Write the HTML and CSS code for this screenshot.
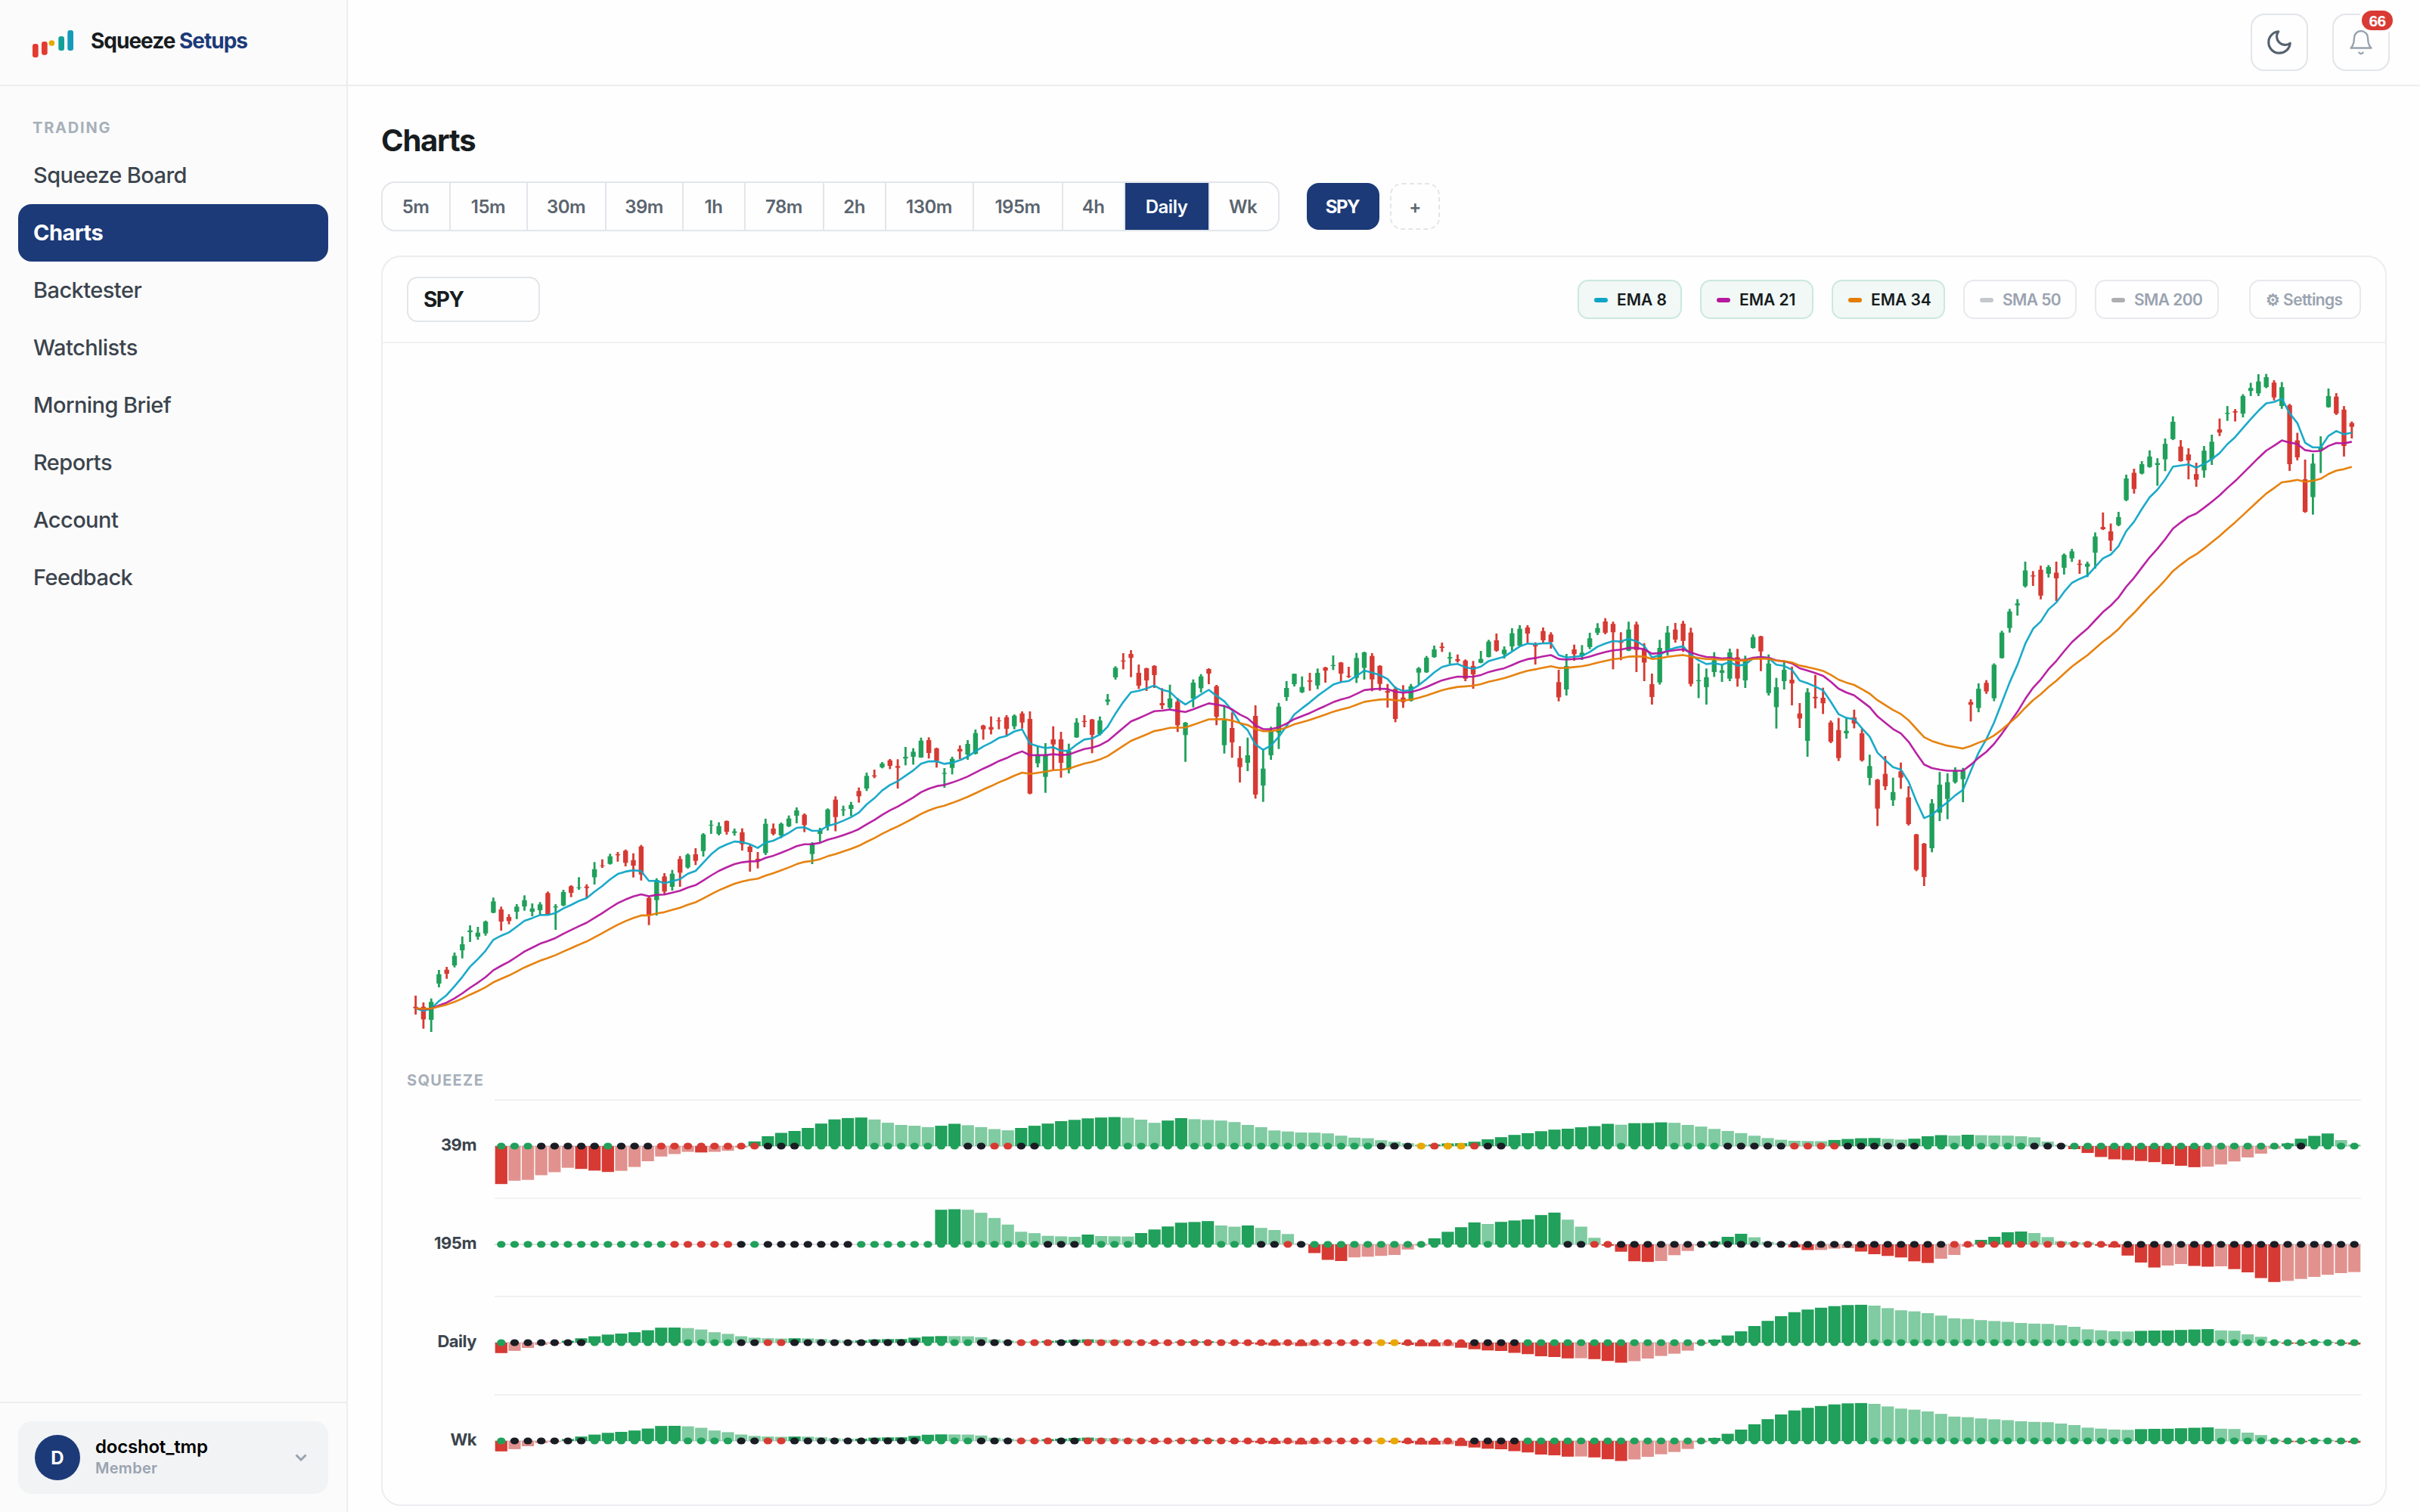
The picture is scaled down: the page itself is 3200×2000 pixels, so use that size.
FILE: index.html
```html
<!DOCTYPE html>
<html lang="en">
<head>
<meta charset="utf-8">
<title>Squeeze Setups – Charts</title>
<link rel="stylesheet" href="styles.css">
</head>
<body>
<div class="app">
  <aside class="sidebar">
    <div class="brand">
      <svg class="brand-mark" viewBox="0 0 54 36" width="54" height="36">
        <rect x="0" y="18" width="7.7" height="18" rx="3" fill="#e23b30"/>
        <rect x="12" y="15" width="7.7" height="17.8" rx="3" fill="#e23b30"/>
        <circle cx="25.4" cy="17" r="3.8" fill="#e8a800"/>
        <rect x="34.3" y="8" width="7.7" height="19" rx="3" fill="#12a19a"/>
        <rect x="46.3" y="0" width="7.7" height="27" rx="3" fill="#169ab9"/>
      </svg>
      <span class="brand-name">Squeeze <b>Setups</b></span>
    </div>
    <nav class="nav">
      <div class="nav-title">TRADING</div>
      <a class="nav-item">Squeeze Board</a>
      <a class="nav-item active">Charts</a>
      <a class="nav-item">Backtester</a>
      <a class="nav-item">Watchlists</a>
      <a class="nav-item">Morning Brief</a>
      <a class="nav-item">Reports</a>
      <a class="nav-item">Account</a>
      <a class="nav-item">Feedback</a>
    </nav>
    <div class="side-foot">
      <div class="user">
        <span class="avatar">D</span>
        <span class="user-text"><span class="user-name">docshot_tmp</span><span class="user-role">Member</span></span>
        <svg class="chev" viewBox="0 0 16 10" width="16" height="10"><path d="M1.5 1.5 8 8l6.5-6.5" fill="none" stroke="#9aa3b0" stroke-width="3"/></svg>
      </div>
    </div>
  </aside>

  <div class="main">
    <header class="topbar">
      <button class="icon-btn moon">
        <svg viewBox="0 0 24 24" width="38" height="38"><path d="M21 12.79A9 9 0 1 1 11.21 3 7 7 0 0 0 21 12.79z"/></svg>
      </button>
      <button class="icon-btn bell">
        <svg viewBox="0 0 24 24" width="36" height="36"><path d="M18 8A6 6 0 0 0 6 8c0 7-3 9-3 9h18s-3-2-3-9"/><path d="M13.73 21a2 2 0 0 1-3.46 0"/></svg>
        <span class="badge">66</span>
      </button>
    </header>

    <main class="content">
      <h1 class="title">Charts</h1>
      <div class="controls">
        <div class="frames">
          <span>5m</span><span>15m</span><span>30m</span><span>39m</span><span>1h</span><span>78m</span><span>2h</span><span>130m</span><span>195m</span><span>4h</span><span class="on">Daily</span><span>Wk</span>
        </div>
        <span class="sym">SPY</span>
        <span class="add">+</span>
      </div>

      <section class="card">
        <div class="card-head">
          <div class="symbol-input">SPY</div>
          <div class="legend">
            <span class="chip on w-s"><i class="sw ema8"></i>EMA 8</span>
            <span class="chip on w-m"><i class="sw ema21"></i>EMA 21</span>
            <span class="chip on w-m"><i class="sw ema34"></i>EMA 34</span>
            <span class="chip w-m"><i class="sw sma50"></i>SMA 50</span>
            <span class="chip w-l"><i class="sw sma200"></i>SMA 200</span>
            <span class="chip settings">⚙ Settings</span>
          </div>
        </div>
        <div class="card-body">
          <svg class="price" id="price" viewBox="0 0 2584 960" width="2584" height="960"></svg>
          <div class="sq-title">SQUEEZE</div>
          <div class="sq-row"><span class="sq-label">39m</span><div class="strip"><svg id="sq-39m" viewBox="0 0 2468 120" width="2468" height="120"></svg></div></div>
          <div class="sq-row"><span class="sq-label">195m</span><div class="strip"><svg id="sq-195m" viewBox="0 0 2468 120" width="2468" height="120"></svg></div></div>
          <div class="sq-row"><span class="sq-label">Daily</span><div class="strip"><svg id="sq-daily" viewBox="0 0 2468 120" width="2468" height="120"></svg></div></div>
          <div class="sq-row"><span class="sq-label">Wk</span><div class="strip"><svg id="sq-wk" viewBox="0 0 2468 120" width="2468" height="120"></svg></div></div>
        </div>
      </section>
    </main>
  </div>
</div>
<script src="charts.js"></script>
</body>
</html>
```
FILE: styles.css
```css
* { box-sizing: border-box; }
body {
  margin: 0;
  font-family: Inter, "Liberation Sans", sans-serif;
  color: #171c20;
  background: #fefefe;
}
.app { display: flex; width: 3200px; height: 2000px; overflow: hidden; }

/* sidebar */
.sidebar {
  width: 460px;
  flex: none;
  display: flex;
  flex-direction: column;
  background: #fbfbfb;
  border-right: 2px solid #ededf1;
}
.brand {
  height: 114px;
  display: flex;
  align-items: center;
  padding-left: 43px;
  border-bottom: 2px solid #ededf1;
}
.brand-mark { margin-top: 4px; }
.brand-name {
  margin: -4px 0 0 23px;
  font-size: 28px;
  font-weight: 700;
  letter-spacing: -1px;
  white-space: nowrap;
}
.brand-name b { color: #1c3a78; font-weight: 700; }
.nav { flex: 1; padding: 30px 24px 0; }
.nav-title {
  height: 50px;
  line-height: 51px;
  padding-left: 19px;
  font-size: 20px;
  font-weight: 700;
  letter-spacing: 1.8px;
  color: #a7b0ba;
}
.nav-item {
  display: flex;
  align-items: center;
  height: 76px;
  padding: 0 0 2px 20px;
  border-radius: 18px;
  font-size: 29px;
  font-weight: 500;
  letter-spacing: -0.55px;
  color: #3b444d;
}
.nav-item.active {
  background: #1c3a78;
  color: #fff;
  font-weight: 700;
}
.side-foot { padding: 24px; border-top: 2px solid #ededf1; }
.user {
  display: flex;
  align-items: center;
  height: 96px;
  padding: 0 28px 0 22px;
  border-radius: 18px;
  background: #f2f3f5;
}
.avatar {
  width: 60px;
  height: 60px;
  border-radius: 50%;
  background: #1c3a78;
  color: #fff;
  font-size: 24px;
  font-weight: 700;
  line-height: 61px;
  text-align: center;
}
.user-text { flex: 1; margin-left: 20px; display: flex; flex-direction: column; line-height: 29px; }
.user-name { font-size: 24px; font-weight: 600; letter-spacing: -0.2px; color: #000; }
.user-role { font-size: 20px; font-weight: 600; letter-spacing: 0.3px; color: #9aa3b0; }

/* top bar */
.main { flex: 1; display: flex; flex-direction: column; }
.topbar {
  height: 114px;
  flex: none;
  display: flex;
  justify-content: flex-end;
  align-items: center;
  gap: 32px;
  padding-right: 40px;
  border-bottom: 2px solid #ededf1;
}
.icon-btn {
  position: relative;
  width: 76px;
  height: 76px;
  padding: 0;
  display: flex;
  align-items: center;
  justify-content: center;
  border: 2px solid #e2e5ea;
  border-radius: 18px;
  background: #fefefe;
}
.icon-btn svg { fill: none; stroke-linecap: round; stroke-linejoin: round; }
.moon svg { stroke: #56626e; stroke-width: 2; }
.bell svg { stroke: #98a2ae; stroke-width: 1.6; }
.badge {
  position: absolute;
  top: -10px;
  right: -10px;
  width: 49px;
  height: 34px;
  border: 4px solid #fefefe;
  border-radius: 17px;
  background: #d93a34;
  color: #fff;
  font-size: 21px;
  font-weight: 700;
  line-height: 28px;
  letter-spacing: -0.8px;
  text-align: center;
}

/* page */
.content { padding: 48px 44px 0 44px; }
.title {
  margin: 0 0 32px;
  height: 46px;
  line-height: 48px;
  font-size: 40px;
  font-weight: 700;
  letter-spacing: -1.2px;
}
.controls { display: flex; align-items: center; margin-bottom: 32px; font-size: 24px; font-weight: 600; letter-spacing: -0.5px; }
.frames {
  display: grid;
  grid-template-columns: 90px 102px 104px 102px 82px 104px 82px 116px 118px 82px 112px 90px;
  height: 66px;
  border: 2px solid #e2e5ea;
  border-radius: 18px;
  overflow: hidden;
  color: #5b6570;
}
.frames span { padding-right: 1px; border-right: 2px solid #e2e5ea; line-height: 63px; text-align: center; }
.frames span:last-child { padding-right: 3px; border-right: 0; }
.frames .on { background: #1c3a78; color: #fff; }
.sym {
  width: 96px;
  height: 62px;
  margin-left: 36px;
  padding-right: 2px;
  border-radius: 16px;
  background: #1c3a78;
  color: #fff;
  font-weight: 700;
  letter-spacing: -1.5px;
  line-height: 63px;
  text-align: center;
}
.add {
  width: 66px;
  height: 62px;
  margin-left: 14px;
  border: 2px dashed #e2e5ea;
  border-radius: 16px;
  color: #5b6570;
  line-height: 59px;
  text-align: center;
}

/* chart card */
.card { width: 2652px; height: 1654px; border: 2px solid #ededf1; border-radius: 26px; }
.card-head {
  display: flex;
  align-items: center;
  justify-content: space-between;
  height: 114px;
  padding: 0 32px;
  border-bottom: 2px solid #f0f0f3;
}
.symbol-input {
  width: 176px;
  height: 60px;
  padding-left: 20px;
  border: 2px solid #e2e5ea;
  border-radius: 14px;
  font-size: 28px;
  font-weight: 700;
  letter-spacing: -1.5px;
  line-height: 56px;
}
.legend { display: flex; gap: 24px; }
.chip {
  display: flex;
  align-items: center;
  height: 52px;
  padding: 1px 0 0 20px;
  border: 2px solid #e8e9ed;
  border-radius: 14px;
  font-size: 21px;
  font-weight: 600;
  letter-spacing: -0.6px;
  color: #9aa3b0;
  white-space: nowrap;
}
.chip.on { background: #f1f8f6; border-color: #cbe8e0; color: #171c20; font-weight: 600; letter-spacing: -0.05px; }
.w-s { width: 138px; }
.w-m { width: 150px; }
.w-l { width: 164px; }
.settings { width: 148px; margin-left: 16px; }
.sw { width: 18px; height: 6px; margin-right: 12px; border-radius: 3px; }
.ema8 { background: #10a5c6; }
.ema21 { background: #b5179e; }
.ema34 { background: #e57c04; }
.sma50 { background: #c4c8cd; }
.sma200 { background: #aeaeb0; }

.card-body { padding: 0 32px; }
.price { display: block; }
.sq-title {
  height: 40px;
  line-height: 30px;
  font-size: 20px;
  font-weight: 700;
  letter-spacing: 1.3px;
  color: #a7b0ba;
}
.sq-row { display: grid; grid-template-columns: 92px 2468px; column-gap: 24px; height: 130px; }
.sq-label {
  font-size: 22px;
  font-weight: 700;
  letter-spacing: -0.5px;
  line-height: 120px;
  text-align: right;
  color: #3b444d;
}
.strip { border-top: 2px solid #f1f1f3; }
.strip svg { display: block; }
```
FILE: charts.js
```js
// Price candles, grouped in blocks. Each block has its own origin and unit;
// each candle is: direction (r = down, g = up), high, body top, body bottom, low.
const blocks = [
  { top: 406, unit: 3, rows: `r 1371 1415 1421 1446|r 1398 1415 1465 1502|g 1382 1396 1467 1515|g 1269 1286 1323 1338|r 1257 1268 1284 1304
g 1200 1213 1251 1259|g 1136 1167 1191 1223|g 1092 1112 1119 1158|g 1098 1121 1137 1149|g 1073 1077 1124 1133
g 982 997 1042 1044|r 1018 1029 1077 1113|r 1048 1059 1075 1088|g 1008 1018 1038 1067|g 973 992 1017 1034
g 1005 1025 1038 1056|g 1000 1009 1032 1052|r 958 964 1049 1051|g 1008 1017 1021 1110|g 951 960 1013 1016
r 933 937 963 980|g 901 941 944 951|r 929 938 944 984|g 841 869 901 930|r 830 854 857 864
g 808 818 848 851|r 801 810 814 839|r 791 796 844 858|r 806 833 855 902|r 773 779 890 914
r 977 983 1051 1091|g 905 912 992 1053|r 885 898 958 967|g 872 887 939 954|r 817 829 883 939
g 807 812 862 867|r 786 810 836 853|g 726 731 797 819|g 675 693 696 729|g 683 698 729 735
r 676 678 721 732|g 708 719 725 736|r 707 723 770 795|r 774 780 801 879|r 801 828 835 866
g 669 689 805 813|r 688 708 729 735|g 684 689 735 746|g 656 668 699 702|g 624 636 657 687
r 648 653 694 722|g 762 767 809 849|g 705 713 729 763|g 628 632 698 716|r 580 593 662 719
g 617 632 636 658|g 602 614 630 658|r 545 559 580 605|g 486 499 549 559|r 474 497 501 508
g 444 450 465 469|r 432 437 459 472|r 433 460 467 549|g 384 423 430 457|g 389 403 423 454
g 347 359 426 427|r 346 357 408 430` },
  { top: 326, unit: 3, rows: `r 627 630 680 706|g 708 727 731 786|g 663 671 707 733|r 618 632 642 672
g 597 612 654 675|g 555 569 651 654|r 536 539 554 595|r 503 545 555 574|r 506 519 522 554
r 498 506 552 580|g 495 500 542 554|r 483 491 527 551|r 483 513 809 812|g 622 655 689 705
g 609 655 743 806|r 542 594 614 717|r 564 594 687 746|g 611 640 714 729|g 510 527 586 588
r 498 521 525 546|r 513 515 576 649|g 503 519 573 579|g 414 436 444 458|g 304 310 348 357
r 252 281 285 316|r 240 255 271 347|r 297 330 381 394|r 310 312 360 402|r 300 302 339 390
r 391 450 459 474|g 377 432 468 476|r 430 445 538 565|g 525 528 577 683|g 356 369 432 467
g 335 344 391 408|r 312 315 333 375|r 378 383 504 538|g 458 519 617 650|r 487 549 606 667
r 621 668 704 765|g 587 657 687 720|r 459 501 813 829|g 633 710 777 842|g 544 558 657 675
g 449 464 567 632|g 363 390 426 441|g 333 334 375 384|g 344 386 407 410|r 330 360 365 401
g 313 330 380 395|r 306 309 321 369|g 261 299 303 319|r 287 289 333 368|r 306 342 346 350
g 251 271 350 370|g 246 249 310 357|r 252 263 356 403|r 300 302 374 401|r 374 402 409 468
r 384 394 513 526|r 379 428 446 469|g 374 383 441 444|g 307 312 329 378|g 263 270 328 330
g 222 237 268 270|r 210 226 231 247|g 248 268 273 295|r 257 276 283 289|r 277 281 353 363
r 283 303 336 393|g 243 275 290 292|g 199 206 267 269|r 174 201 242 246|g 225 238 256 273
g 153 173 225 244|g 141 155 222 226|r 141 150 174 212|r 209 220 225 297|r 150 164 201 212
r 169 178 208 234|r 318 367 427 443|g 255 303 396 420|r 218 237 256 282|g 220 250 264 279
g 171 193 228 236|g 133 152 171 180|r 113 126 171 177|r 127 136 169 316|r 169 205 211 280
g 127 158 242 244|r 127 138 239 327|r 212 236 289 363|r 333 375 426 456|g 199 231 368 377
g 144 170 240 261|r 132 158 198 210|r 124 135 203 247|r 151 170 374 384|g 293 359 363 430
g 313 347 387 456|g 248 280 327 346|g 296 320 330 366|g 234 249 353 363|r 235 268 353 385
g 262 280 360 390|g 178 188 231 234|r 183 185 245 323|g 257 293 410 420|g 350 387 466 551
g 287 318 363 396|r 305 357 372 459|r 450 491 511 549|g 391 407 600 663|r 338 425 431 471
r 389 429 451 493|r 519 527 603 609|r 509 557 668 680|g 508 560 570 591|r 476 507 531 550
r 551 570 677 682|g 655 700 747 776|r 751 754 869 938|r 660 731 780 795|g 746 803 835 858
r 686 721 746 790|r 780 824 930 936|r 969 971 1111 1117|r 1005 1008 1140 1176|g 831 848 1026 1042` },
  { top: 26, unit: 2.8, rows: `g 1515 1562 1666 1697|g 1520 1553 1615 1690|g 1498 1512 1553 1558|g 1500 1510 1542 1627
r 1246 1256 1266 1328|g 1187 1207 1278 1294|r 1175 1185 1217 1226|g 1113 1118 1242 1253|g 992 999 1093 1095
g 911 921 982 999|g 875 891 898 936|g 736 769 827 832|r 771 787 791 826|r 751 766 862 876
g 749 756 781 795|r 736 777 798 882|g 706 711 759 784|g 689 698 724 737|r 729 744 748 781
g 736 744 755 793|g 628 643 703 762|r 554 608 616 619|r 595 624 658 697|g 552 571 601 605
g 414 428 508 512|r 392 407 467 484|g 364 375 410 413|g 324 347 386 388|g 353 371 378 455
g 280 300 357 401|g 198 218 282 286|r 286 310 364 366|r 316 339 361 431|r 370 412 433 459
g 308 325 398 425|g 266 292 357 378|r 206 246 258 271|g 160 185 189 215|r 171 179 184 217
g 116 123 188 202|g 74 93 104 123|g 42 69 113 123|g 41 53 90 94|r 64 73 128 139
g 71 90 160 170|r 152 157 375 400|r 259 287 350 361|r 358 431 552 555|g 336 373 497 562
g 272 311 325 408|g 95 123 164 166|r 112 125 188 193|r 160 173 308 347|r 217 223 237 280` }
];

const candles = blocks.flatMap(b => b.rows.split(/[|\n]/).map(s => {
  const [dir, ...v] = s.trim().split(" ");
  const [high, top, bottom, low] = v.map(n => b.top + n / b.unit);
  return { dir, high, top, bottom, low };
}));

const candleX = i => 11.6 + i * 10.282;

function ema(period) {
  const k = 2 / (period + 1);
  let value = null;
  return candles.map((c, i) => {
    const close = c.dir === "g" ? c.top : c.bottom;
    value = value === null ? close : value + k * (close - value);
    return candleX(i).toFixed(1) + "," + value.toFixed(1);
  }).join(" ");
}

function drawPrice() {
  let out = "";
  candles.forEach((c, i) => {
    const x = candleX(i);
    const fill = c.dir === "g" ? "#20a05a" : "#d63a33";
    out += `<rect x="${(x - 1.4).toFixed(1)}" y="${c.high.toFixed(1)}" width="2.8" height="${(c.low - c.high).toFixed(1)}" fill="${fill}"/>`;
    out += `<rect x="${(x - 3.2).toFixed(1)}" y="${c.top.toFixed(1)}" width="6.4" height="${(c.bottom - c.top).toFixed(1)}" fill="${fill}"/>`;
  });
  [[8, "#10a5c6"], [21, "#b5179e"], [34, "#e57c04"]].forEach(([period, color]) => {
    out += `<polyline points="${ema(period)}" fill="none" stroke="${color}" stroke-opacity="0.95" stroke-width="2.6" stroke-linejoin="round"/>`;
  });
  document.getElementById("price").innerHTML = out;
}

// Momentum heights (positive above the zero line) and run-length squeeze dots.
const daily = {
  bars: `-13.8 -10.9 -7 -3 -1.5 2.5 5.8 8.4 10.7 12 13.8 16.4 19.8 20 19.3 17.4 13.8 11.6 8.5 6.6 5.8 5.4 5.8 5.6 4.7 3.6 2.8 3 4.3 4.7 4.8 6.6 8.2 8.7 8.6 8.4 7.2 4.2 2.8 1.8 1.6 2.4
3 3.9 4.4 3.8 3.6 2.9 1.8 -1.5 -1.4 1.5 1.7 1.8 1.3 -1.3 -1.6 -2.6 -3.8 -2.8 -4.5 -3.8 -1.8 -1.6 -1.5 -1.3 -1.2 -1.8 -3 -4.7 -4.8 -4.5 -6.7 -8.7 -10.3 -11 -13.5 -15.2 -18 -19 -20.8 -20.6 -21.8 -24.2 -26.5 -24.5 -21 -17.6 -14.6 -10.6 -1.8 4
9.5 15 22 28.8 35 40.3 43.8 46.2 48.3 49.7 50.1 49 45.6 42.8 41.4 39 35.8 32.2 31.4 29.8 28.6 27.5 26 25.2 24.8 23 21 17.6 16.3 15.1 14.7 15.6 16 16.1 16.8 17.4 17.9 16.2 15.8 11 7.8 1.8 -1.5 -1.6 1.6 1.3 -1.5 -2.5`,
  dots: "g1 k6 g11 k2 r2 k10 g4 k3 r3 k2 r22 o2 r5 k4 g63"
};
const squeeze = {
  "sq-39m": {
    bars: `-50.2 -45.8 -44.7 -38.5 -34.5 -28.7 -30.2 -32.4 -34.2 -32.7 -27.6 -20 -13.8 -10.5 -7.6 -8.4 -7.6 -6.2 -2 6.2 13.1 17.5 20 24 29.8 35.3 37.1 37.8 35.2 30.9 28 26.9 25.1 26.9 29.5 27.6 25.1 22.5 20.9 24 26.9 29.8
33 34.7 36.7 37.8 38.4 37.5 35 30.8 33.8 37 35.6 34.6 33.8 31.8 28 25 20.7 19.3 18 17.8 16.8 13.8 11.2 10.4 7.8 5.8 3.8 2 2.2 3.5 3.8 5.8 9 11.8 14.8 17.1 19.7 21.8 23 24.9 26.4 29.5 28.3 30.3 30.4 31.4 30.8 28 25.8 22.7
20 17.2 13.7 10.6 8.4 7 6.7 6.5 8.1 9.4 10.4 10.7 9.6 8.6 9.8 13 14.5 13.8 15 14.4 14 13.8 13 11.6 6 1.8 -4 -9.1 -14.4 -17.5 -18.5 -19.7 -21.2 -24 -26 -27.9 -27.2 -24.3 -20.3 -15 -10 -3.5 3.5 9.8 13.5 16.7 8 2`,
    dots: "g3 k5 g1 k3 r8 k3 g12 k2 r2 k2 g25 k3 o1 r1 o2 r1 k2 g16 k5 r4 k6 g8 k3 g17 k1 g4"
  },
  "sq-195m": {
    bars: `0 0 0 0 0 0 0 0 0 0 0 0 0 0 0 0 0 0 0 0 0 0 0 0 0 0 0 0 0 0 0 0 0 45.8 46.5 45.8 41.8 34.9 26.2 16.7 14.9 11.3
10.6 10 13 11 10.7 10.4 15 19.7 23.7 28.7 29.6 30.8 25 23.4 25 21.8 19 13.7 1.2 -11.5 -20.5 -22 -17.2 -16.3 -15.2 -14 -6.8 -1.5 8 16.6 22.7 29 27 29.8 31.6 33 38.8 42 32.7 23.5 8.7 -1.8 -9.7 -22.3 -23.2 -22 -14.3 -8.7 -1.5 3.8
10 14 9.4 3.3 1.5 -4 -7.5 -7.4 -5.6 -5 -9.5 -13 -15.3 -17.3 -22.4 -24.6 -19 -14 -3 6 10 16 17 15 9.6 4 3 2.6 -1.8 -4 -14.8 -24 -30.6 -28 -26 -28.5 -29.5 -29 -32.7 -37 -44.6 -49.8 -48.3 -45.7 -43 -40.2 -38 -36.6`,
    dots: "g13 r5 k1 g1 k7 g14 k3 g13 k2 r1 k1 g19 k2 r2 k25 r13 k18"
  },
  "sq-daily": daily,
  "sq-wk": daily
};
const dotColors = { g: "#20a05a", k: "#1a1d23", r: "#d63a33", o: "#e8a800" };

function drawStrip(id, data) {
  const step = 2468 / 140;
  const zero = 60;
  let out = `<rect x="0" y="${zero - 1}" width="2468" height="2" fill="#dcdee2"/>`;
  const bars = data.bars.trim().split(/\s+/).map(Number);
  bars.forEach((v, i) => {
    if (!v) return;
    const prev = i ? bars[i - 1] : 0;
    const fill = v > 0 ? (v >= prev ? "#20a05a" : "#80cba1") : (v <= prev ? "#d63a33" : "#e1928e");
    const y = v > 0 ? zero - v : zero;
    out += `<rect x="${(i * step + 0.7).toFixed(2)}" y="${y.toFixed(1)}" width="16.2" height="${Math.abs(v).toFixed(1)}" fill="${fill}"/>`;
  });
  let n = 0;
  data.dots.split(" ").forEach(run => {
    for (let j = 0; j < Number(run.slice(1)); j++, n++) {
      out += `<ellipse cx="${((n + 0.5) * step).toFixed(2)}" cy="${zero}" rx="5.7" ry="4.6" fill="${dotColors[run[0]]}"/>`;
    }
  });
  document.getElementById(id).innerHTML = out;
}

drawPrice();
Object.entries(squeeze).forEach(([id, data]) => drawStrip(id, data));
```
